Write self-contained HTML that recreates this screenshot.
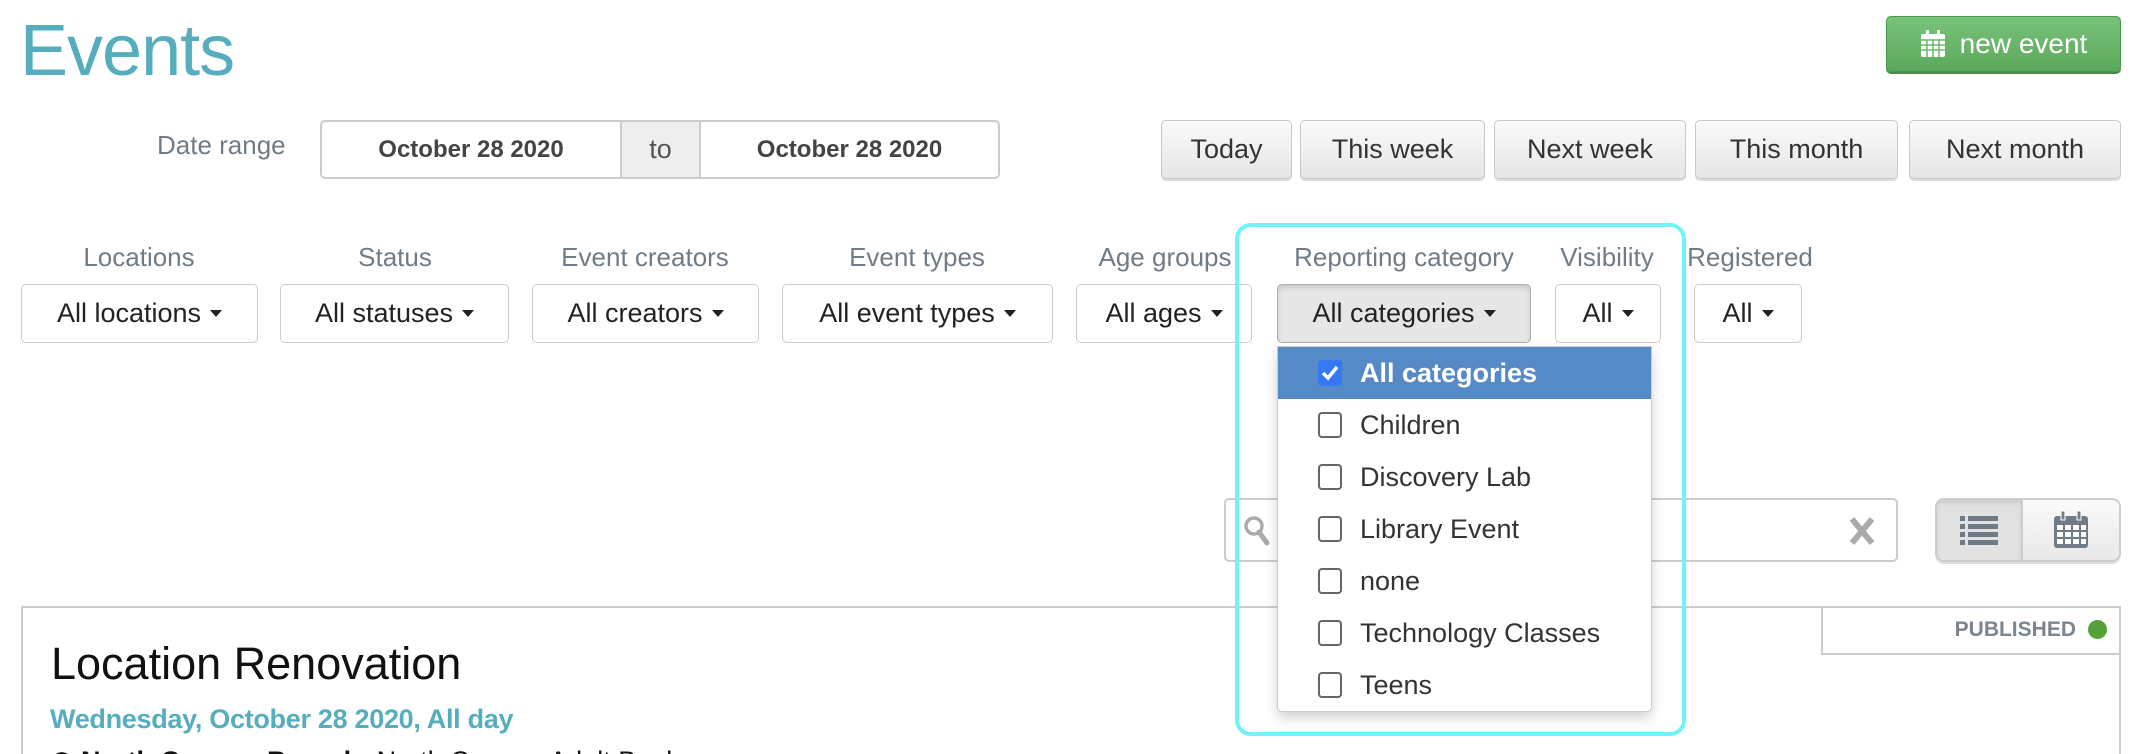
<!DOCTYPE html>
<html><head><meta charset="utf-8"><style>
*{box-sizing:border-box;margin:0;padding:0}
html,body{width:2144px;height:754px;overflow:hidden}
body{background:#fff;font-family:"Liberation Sans",sans-serif;color:#333;position:relative}
.a{position:absolute}
.btn{position:absolute;border:1px solid #ccc;border-radius:5px;background:#fff;font-size:27px;color:#222;display:flex;align-items:center;justify-content:center;white-space:nowrap}
.gb{background:linear-gradient(#fafafa,#e6e6e6);border-color:#c8c8c8;box-shadow:0 2px 0 #ddd;color:#333}
.car{display:inline-block;width:0;height:0;border-left:6px solid transparent;border-right:6px solid transparent;border-top:7px solid #222;margin-left:9px;vertical-align:middle}
.lbl{position:absolute;font-size:26px;color:#6f7c88;text-align:center;white-space:nowrap;transform:translateX(-50%)}
.it{position:absolute;left:0;width:375px;height:52px;display:flex;align-items:center;font-size:27px;color:#333}
.cb{width:24px;height:26px;border:2px solid #666;border-radius:4px;margin-left:40px;margin-right:18px;background:#fff}
</style></head><body>
<div class="a" style="left:20px;top:10px;font-size:72px;color:#56adbe;letter-spacing:-1px">Events</div>
<div class="btn" style="left:1886px;top:16px;width:235px;height:56px;background:linear-gradient(#79c27a,#5ba95c);border-color:#4d964e;color:#fff;font-size:28px;box-shadow:0 2px 0 #4a8a4b">
<svg width="26" height="28" viewBox="0 0 26 28" style="margin-right:14px"><rect x="1" y="4" width="24" height="23" rx="2" fill="#fff"/><g stroke="#6ab56b" stroke-width="1.5"><path d="M1 10H25M1 15H25M1 20H25M7 10V27M13 10V27M19 10V27"/></g><rect x="6" y="0" width="3" height="7" fill="#fff"/><rect x="17" y="0" width="3" height="7" fill="#fff"/></svg>new event</div>

<div class="a" style="left:157px;top:130px;font-size:26px;color:#6f7c88">Date range</div>
<div class="a" style="left:320px;top:120px;width:680px;height:59px;border:2px solid #ccc;border-radius:5px;display:flex;font-size:24px;font-weight:bold;color:#444">
<div style="width:298px;display:flex;align-items:center;justify-content:center">October 28 2020</div>
<div style="width:81px;background:#eee;border-left:2px solid #ccc;border-right:2px solid #ccc;display:flex;align-items:center;justify-content:center;font-weight:normal;font-size:27px;color:#555">to</div>
<div style="flex:1;display:flex;align-items:center;justify-content:center">October 28 2020</div></div>

<div class="btn gb" style="left:1161px;top:120px;width:131px;height:59px">Today</div>
<div class="btn gb" style="left:1300px;top:120px;width:185px;height:59px">This week</div>
<div class="btn gb" style="left:1494px;top:120px;width:192px;height:59px">Next week</div>
<div class="btn gb" style="left:1695px;top:120px;width:203px;height:59px">This month</div>
<div class="btn gb" style="left:1909px;top:120px;width:212px;height:59px">Next month</div>

<div class="lbl" style="left:139px;top:242px">Locations</div>
<div class="lbl" style="left:395px;top:242px">Status</div>
<div class="lbl" style="left:645px;top:242px">Event creators</div>
<div class="lbl" style="left:917px;top:242px">Event types</div>
<div class="lbl" style="left:1165px;top:242px">Age groups</div>
<div class="lbl" style="left:1404px;top:242px">Reporting category</div>
<div class="lbl" style="left:1607px;top:242px">Visibility</div>
<div class="lbl" style="left:1750px;top:242px">Registered</div>

<div class="btn" style="left:21px;top:284px;width:237px;height:59px">All locations<span class="car"></span></div>
<div class="btn" style="left:280px;top:284px;width:229px;height:59px">All statuses<span class="car"></span></div>
<div class="btn" style="left:532px;top:284px;width:227px;height:59px">All creators<span class="car"></span></div>
<div class="btn" style="left:782px;top:284px;width:271px;height:59px">All event types<span class="car"></span></div>
<div class="btn" style="left:1076px;top:284px;width:176px;height:59px">All ages<span class="car"></span></div>
<div class="btn" style="left:1277px;top:284px;width:254px;height:59px;background:#e6e6e6;border-color:#adadad;box-shadow:inset 0 3px 5px rgba(0,0,0,.12)">All categories<span class="car"></span></div>
<div class="btn" style="left:1555px;top:284px;width:106px;height:59px">All<span class="car"></span></div>
<div class="btn" style="left:1694px;top:284px;width:108px;height:59px">All<span class="car"></span></div>

<div class="a" style="left:1224px;top:498px;width:674px;height:64px;border:2px solid #ccc;border-radius:5px"></div>
<svg class="a" style="left:1243px;top:515px" width="28" height="32" viewBox="0 0 28 32"><circle cx="11" cy="11" r="8" fill="none" stroke="#aaa" stroke-width="3.5"/><path d="M16 17L24 28" stroke="#aaa" stroke-width="5" stroke-linecap="round"/></svg>
<svg class="a" style="left:1848px;top:516px" width="28" height="30" viewBox="0 0 28 30"><path d="M4 3L24 27M24 3L4 27" stroke="#aaa" stroke-width="6"/></svg>
<div class="a" style="left:1935px;top:498px;width:186px;height:64px;border:2px solid #ccc;border-radius:9px;overflow:hidden;display:flex;box-shadow:0 2px 0 #ddd">
<div style="width:86px;background:#e2e2e2;border-right:2px solid #ccc;display:flex;align-items:center;justify-content:center;box-shadow:inset 0 3px 5px rgba(0,0,0,.1)"><svg width="38" height="30" viewBox="0 0 38 30"><g fill="#6f7c88"><rect x="0" y="1" width="5" height="5"/><rect x="8" y="1" width="30" height="5"/><rect x="0" y="9" width="5" height="5"/><rect x="8" y="9" width="30" height="5"/><rect x="0" y="17" width="5" height="5"/><rect x="8" y="17" width="30" height="5"/><rect x="0" y="25" width="5" height="5"/><rect x="8" y="25" width="30" height="5"/></g></svg></div>
<div style="flex:1;background:linear-gradient(#fafafa,#e8e8e8);display:flex;align-items:center;justify-content:center"><svg width="36" height="38" viewBox="0 0 36 38"><rect x="1" y="5" width="34" height="32" rx="3" fill="#6f7c88"/><g fill="#fff"><rect x="4" y="14" width="6" height="5"/><rect x="12" y="14" width="6" height="5"/><rect x="20" y="14" width="6" height="5"/><rect x="28" y="14" width="5" height="5"/><rect x="4" y="21" width="6" height="5"/><rect x="12" y="21" width="6" height="5"/><rect x="20" y="21" width="6" height="5"/><rect x="28" y="21" width="5" height="5"/><rect x="4" y="28" width="6" height="5"/><rect x="12" y="28" width="6" height="5"/><rect x="20" y="28" width="6" height="5"/><rect x="28" y="28" width="5" height="5"/></g><rect x="8" y="0" width="4" height="9" fill="#6f7c88" stroke="#fff"/><rect x="24" y="0" width="4" height="9" fill="#6f7c88" stroke="#fff"/></svg></div></div>

<div class="a" style="left:21px;top:606px;width:2100px;height:160px;border:2px solid #ccc;border-bottom:none"></div>
<div class="a" style="left:1821px;top:606px;width:300px;height:49px;border:2px solid #ccc;border-top:none;display:flex;align-items:center;justify-content:flex-end;padding-right:12px;font-size:21px;font-weight:bold;color:#7b8590">PUBLISHED<span style="display:inline-block;width:19px;height:19px;border-radius:50%;background:#55a337;margin-left:12px"></span></div>
<div class="a" style="left:51px;top:638px;font-size:45px;color:#111">Location Renovation</div>
<div class="a" style="left:50px;top:704px;font-size:27px;color:#56adbe;font-weight:bold;letter-spacing:-0.3px">Wednesday, October 28 2020, All day</div>
<div class="a" style="left:50px;top:746px;font-size:27px;color:#111;font-weight:bold;white-space:nowrap">&#9673; North Canyon Branch: <span style="font-weight:normal">North Canyon Adult Book</span></div>

<div class="a" style="left:1235px;top:223px;width:451px;height:513px;border:4px solid #6ff4fb;border-radius:16px"></div>
<div class="a" style="left:1277px;top:346px;width:375px;height:366px;background:#fff;border:1px solid #ccc;border-radius:0 0 5px 5px;box-shadow:0 6px 12px rgba(0,0,0,.18);overflow:hidden">
<div class="it" style="top:0;background:#558ac6;color:#fff;font-weight:bold"><span class="cb" style="background:#3478f6;border-color:#3478f6;display:flex;align-items:center;justify-content:center"><svg width="18" height="16" viewBox="0 0 18 16"><path d="M2 8L7 13L16 2" stroke="#fff" stroke-width="3.5" fill="none"/></svg></span>All categories</div>
<div class="it" style="top:52px"><span class="cb"></span>Children</div>
<div class="it" style="top:104px"><span class="cb"></span>Discovery Lab</div>
<div class="it" style="top:156px"><span class="cb"></span>Library Event</div>
<div class="it" style="top:208px"><span class="cb"></span>none</div>
<div class="it" style="top:260px"><span class="cb"></span>Technology Classes</div>
<div class="it" style="top:312px"><span class="cb"></span>Teens</div>
</div>
</body></html>
